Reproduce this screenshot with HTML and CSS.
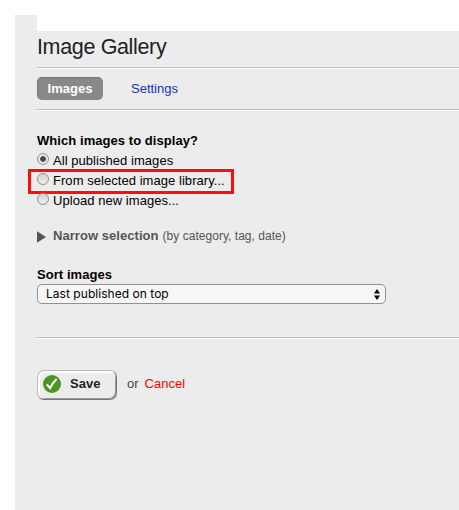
FILE: index.html
```html
<!DOCTYPE html>
<html lang="en">
<head>
<meta charset="utf-8">
<title>Image Gallery</title>
<link rel="stylesheet" href="styles.css">
</head>
<body>
<div class="page">
  <div class="gutter"></div>
  <main class="panel">
    <h1 class="title">Image Gallery</h1>
    <nav class="tabs">
      <a class="tab active">Images</a>
      <a class="tab link">Settings</a>
    </nav>
    <form class="form">
      <h2 class="label question">Which images to display?</h2>
      <label class="option"><span class="radio checked"></span><span class="text">All published images</span></label>
      <label class="option"><span class="radio"></span><span class="text">From selected image library...</span><span class="highlight"></span></label>
      <label class="option"><span class="radio"></span><span class="text">Upload new images...</span></label>
      <div class="narrow">
        <svg class="triangle" width="9" height="12" viewBox="0 0 9 12"><path d="M0 .3L9 6L0 11.7Z" fill="#555"/></svg>
        <b>Narrow selection</b><span class="hint">(by category, tag, date)</span>
      </div>
      <h2 class="label sort">Sort images</h2>
      <div class="select">
        <span>Last published on top</span>
        <svg width="6" height="11" viewBox="0 0 6 11"><path d="M0 4.5L3 0L6 4.5ZM0 6.5L3 11L6 6.5Z"/></svg>
      </div>
      <div class="actions">
        <button type="button" class="save">
          <svg width="18" height="18" viewBox="0 0 18 18"><circle cx="9" cy="9" r="9" fill="#4f9322"/><path d="M3.8 9.5L7.2 13.2C8.6 9.8 10.6 6.8 13.6 4" fill="none" stroke="#fff" stroke-width="2"/></svg>
          <span class="save-text">Save</span>
        </button>
        <span class="or">or</span>
        <a class="cancel">Cancel</a>
      </div>
    </form>
  </main>
</div>
</body>
</html>
```

FILE: styles.css
```css
* { box-sizing: border-box; }
body { margin: 0; background: #fff; font: 13px/20px "Liberation Sans", Arial, sans-serif; color: #000; }
.page { display: flex; height: 510px; padding: 15px 0 0 15px; overflow: hidden; }
.gutter { width: 22px; background: #ececec; }
.panel { flex: 1; margin-top: 16px; background: #ececec; }
.title { margin: 0; height: 38px; padding-top: 4px; font-size: 21.5px; letter-spacing: -.35px; line-height: 24px; font-weight: normal; color: #222; border-bottom: 1px solid #fff; box-shadow: inset 0 -1px #bdbdbd; }
.tabs { display: flex; height: 42px; padding-top: 8px; border-bottom: 1px solid #fff; box-shadow: inset 0 -1px #bdbdbd; }
.tab { height: 23px; line-height: 23px; }
.active { width: 66px; text-align: center; font-weight: bold; color: #fff; background: #888; border: 1px solid #777; border-right-color: #888; border-bottom-color: #888; border-radius: 5px; line-height: 21px; }
.link { margin-left: 28px; color: #1339a8; }
.label { margin: 0; font-size: 13px; line-height: 20px; font-weight: bold; }
.question { letter-spacing: .06px; }
.sort { letter-spacing: .06px; }
.form { padding-top: 20px; }
.option { position: relative; display: flex; height: 20px; line-height: 20px; }
.text { letter-spacing: .05px; }
.radio { width: 12px; height: 12px; margin: 2px 4px 0 0; border: 1px solid #929292; border-radius: 50%; background: linear-gradient(#d4d4d4, #eee); }
.checked { background: radial-gradient(circle, #444 0 2.4px, #e6e6e6 3.2px); }
.highlight { position: absolute; left: -9px; top: -2px; width: 206px; height: 25px; border: 3px solid #ff0c0c; }
.narrow { display: flex; margin-top: 15px; height: 20px; color: #555; }
.narrow b { letter-spacing: .05px; }
.triangle { margin: 5px 7px 0 0; }
.hint { margin-left: 4px; font-size: 12px; letter-spacing: .03px; }
.sort { margin-top: 19px; height: 19px; }
.select { display: flex; justify-content: space-between; align-items: center; width: 349px; height: 20px; padding: 0 5px 0 8px; border: 1px solid #929292; border-radius: 5px; background: #f6f6f6; font: 12px/18px Inter, "Liberation Sans", sans-serif; letter-spacing: .04px; }
.actions { display: flex; margin-top: 33px; padding-top: 32px; border-top: 1px solid #bdbdbd; box-shadow: inset 0 1px #fff; line-height: 27px; }
.save { display: flex; align-items: center; width: 80px; height: 30px; padding: 0 0 1px 5px; gap: 9px; border: 1px solid; border-color: #bbb #777 #777 #bbb; border-radius: 7px; background: #ececec; box-shadow: inset 1px 1px 1px 1px #fff, inset -1px -1px #8b8b8b; font: bold 13px/20px "Liberation Sans", Arial, sans-serif; color: #222; }
.save svg { margin-top: -1px; }
.save-text { margin-top: -2px; }
.or { margin-left: 10px; color: #444; }
.cancel { margin-left: 6px; color: #f00; }
```
